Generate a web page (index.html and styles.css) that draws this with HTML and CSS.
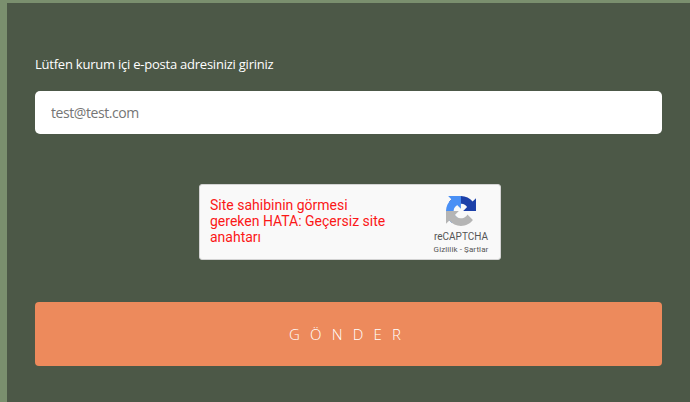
FILE: index.html
```html
<!DOCTYPE html>
<html lang="tr">
<head>
<meta charset="utf-8">
<title>E-posta</title>
<link rel="stylesheet" href="styles.css">
</head>
<body>
<form class="panel">
  <label class="label" for="email"><span>Lütfen kurum içi e-posta adresinizi giriniz</span></label>
  <input class="field" id="email" type="email" placeholder="test@test.com">
  <div class="captcha">
    <p class="error">Site sahibinin görmesi<br>gereken HATA: Geçersiz site<br>anahtarı</p>
    <div class="brand">
      <svg class="logo" viewBox="0 0 64 64">
        <path fill="#1c40a9" d="M64 31.955l-.033-1.37V4.687l-7.16 7.16C50.948 4.674 42.033.093 32.05.093c-10.4 0-19.622 4.96-25.458 12.64l11.736 11.86a15.55 15.55 0 0 1 4.754-5.334c2.05-1.6 4.952-2.906 8.968-2.906.485 0 .86.057 1.135.163 4.976.393 9.288 3.14 11.828 7.124l-8.307 8.307L64 31.953"/>
        <path fill="#4a90f5" d="M31.862.094l-1.37.033H4.594l7.16 7.16C4.58 13.147 0 22.06 0 32.046c0 10.4 4.96 19.622 12.64 25.458L24.5 45.768a15.55 15.55 0 0 1-5.334-4.754c-1.6-2.05-2.906-4.952-2.906-8.968 0-.485.057-.86.163-1.135.393-4.976 3.14-9.288 7.124-11.828l8.307 8.307L31.86.095"/>
        <path fill="#b5b5b5" d="M.001 32.045l.033 1.37v25.898l7.16-7.16c5.86 7.173 14.774 11.754 24.76 11.754 10.4 0 19.622-4.96 25.458-12.64l-11.736-11.86a15.55 15.55 0 0 1-4.754 5.334c-2.05 1.6-4.952 2.906-8.968 2.906-.485 0-.86-.057-1.135-.163-4.976-.393-9.288-3.14-11.828-7.124l8.307-8.307c-10.522.04-22.4.066-27.295-.005"/>
      </svg>
      <div class="name">reCAPTCHA</div>
      <div class="links">Gizlilik - Şartlar</div>
    </div>
  </div>
  <button class="submit" type="button">GÖNDER</button>
</form>
</body>
</html>
```
FILE: styles.css
```css
* { box-sizing: border-box; }
body {
  margin: 0;
  height: 402px;
  padding: 3px 0 0 7px;
  overflow: hidden;
  background: #7a8f6e;
  font-family: "Open Sans", "Noto Sans", sans-serif;
}
.panel {
  display: flex;
  flex-direction: column;
  height: 399px;
  padding: 51px 28px 0;
  background: #4c5847;
}
.label {
  height: 37px;
  font-size: 13px;
  line-height: 20px;
  letter-spacing: -0.23px;
  color: #fff;
}
.field {
  height: 43px;
  padding: 0 16px;
  border: 0;
  border-radius: 5px;
  background: #fff;
  font: 14px/21px "Open Sans", "Noto Sans", sans-serif;
  letter-spacing: -0.42px;
}
.field::placeholder { color: #757575; }
.captcha {
  display: flex;
  justify-content: space-between;
  align-self: center;
  width: 302px;
  height: 76px;
  margin: 50px 0 42px 3px;
  border: 1px solid #d3d3d3;
  border-radius: 3px;
  background: #f9f9f9;
  font-family: Roboto, sans-serif;
}
.error {
  margin: 12px 0 0 10px;
  font-size: 14px;
  line-height: 16px;
  color: #fb1717;
}
.brand {
  display: flex;
  flex-direction: column;
  align-items: center;
  width: 78px;
  padding-top: 11px;
  color: #555;
  white-space: nowrap;
}
.logo { width: 30px; height: 30px; }
.name { margin-top: 5px; font-size: 10px; line-height: 12px; }
.links { margin-top: 2px; font-size: 8px; line-height: 10px; letter-spacing: 0.1px; }
.submit {
  height: 64px;
  padding: 0 0 0 3px;
  border: 0;
  border-radius: 4px;
  background: #ed8a5c;
  color: #fff;
  font: 300 15px/22px "Open Sans", "Noto Sans", sans-serif;
  letter-spacing: 10.2px;
}
```
